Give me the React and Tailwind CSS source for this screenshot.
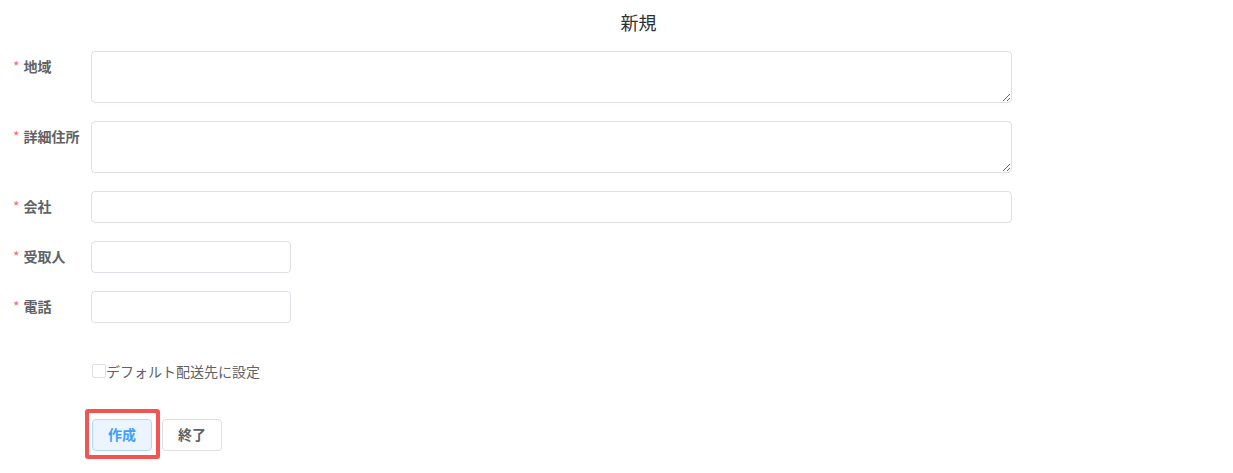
import React from "react";

const font = { fontFamily: '"Noto Sans CJK JP", "Noto Sans", sans-serif' };

const Label = ({ text }) => (
  <div className="w-[91px] shrink-0 pl-[13px] h-8 pb-[2px] flex items-center whitespace-nowrap text-[14px] font-bold text-[#606266]">
    <span className="text-[#f56c6c] mr-[4px] font-normal">*</span>
    {text}
  </div>
);

const Row = ({ label, children }) => (
  <div className="flex items-start">
    <Label text={label} />
    {children}
  </div>
);

export default function App() {
  return (
    <div className="bg-white w-[1233px] h-[473px] text-[#606266]" style={font}>
      <div className="h-[44px] pl-[44px] flex items-center justify-center text-[18px] text-[#303133]">
        新規
      </div>
      <div className="flex flex-col gap-[18px] mt-[7px]">
        <Row label="地域">
          <textarea className="w-[921px] h-[52px] border border-[#dcdfe6] rounded-[4px] resize-y outline-none" />
        </Row>
        <Row label="詳細住所">
          <textarea className="w-[921px] h-[52px] border border-[#dcdfe6] rounded-[4px] resize-y outline-none" />
        </Row>
        <Row label="会社">
          <input className="w-[921px] h-8 border border-[#dcdfe6] rounded-[4px] outline-none" />
        </Row>
        <Row label="受取人">
          <input className="w-[200px] h-8 border border-[#dcdfe6] rounded-[4px] outline-none" />
        </Row>
        <Row label="電話">
          <input className="w-[200px] h-8 border border-[#dcdfe6] rounded-[4px] outline-none" />
        </Row>
      </div>
      <div className="pl-[92px] mt-[41px] flex items-center h-[14px] text-[14px] text-[#606266]">
        <span className="w-[14px] h-[14px] border border-[#dcdfe6] rounded-[2px] bg-white" />
        <span>デフォルト配送先に設定</span>
      </div>
      <div className="pl-[85px] mt-[31px] flex items-start gap-[2px]">
        <div className="border-[4px] border-[#f25353] rounded-[3px] pl-[3px] pr-[4px] pt-[6px] pb-[4px]">
          <button className="block w-[60px] h-8 pb-[2px] bg-[#ecf5ff] border border-[#b3d8ff] rounded-[4px] text-[#409eff] text-[14px] font-bold">
            作成
          </button>
        </div>
        <button className="mt-[10px] w-[60px] h-8 pb-[2px] bg-white border border-[#dcdfe6] rounded-[4px] text-[#606266] text-[14px] font-bold">
          終了
        </button>
      </div>
    </div>
  );
}
